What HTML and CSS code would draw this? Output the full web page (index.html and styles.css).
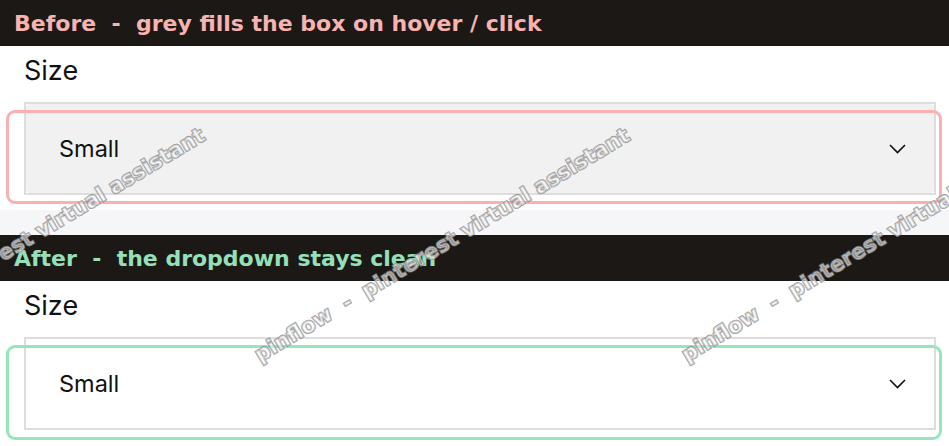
FILE: index.html
```html
<!DOCTYPE html>
<html lang="en">
<head>
  <meta charset="UTF-8">
  <meta name="viewport" content="width=device-width, initial-scale=1.0">
  <title>Size dropdown</title>
  <link rel="stylesheet" href="styles.css">
</head>
<body>
  <div class="page">
    <section class="demo before">
      <h2 class="caption">Before  -  grey fills the box on hover / click</h2>
      <div class="field">
        <label class="field-label">Size</label>
        <div class="select-wrap">
          <div class="select">
            <div class="select-inner">
              <span class="select-value">Small</span>
              <svg class="chevron" width="17" height="10" viewBox="0 0 17 10">
                <path d="M1 1 L8.5 8.5 L16 1" fill="none" stroke="#111" stroke-width="1.6"/>
              </svg>
            </div>
          </div>
          <span class="ring"></span>
        </div>
      </div>
    </section>

    <div class="spacer"></div>

    <section class="demo after">
      <h2 class="caption">After  -  the dropdown stays clean</h2>
      <div class="field">
        <label class="field-label">Size</label>
        <div class="select-wrap">
          <div class="select">
            <div class="select-inner">
              <span class="select-value">Small</span>
              <svg class="chevron" width="17" height="10" viewBox="0 0 17 10">
                <path d="M1 1 L8.5 8.5 L16 1" fill="none" stroke="#111" stroke-width="1.6"/>
              </svg>
            </div>
          </div>
          <span class="ring"></span>
        </div>
      </div>
    </section>

    <div class="watermark">
      <span class="mark m1">pinflow  -  pinterest virtual assistant</span>
      <span class="mark m2">pinflow  -  pinterest virtual assistant</span>
      <span class="mark m3">pinflow  -  pinterest virtual assistant</span>
    </div>
  </div>
</body>
</html>
```

FILE: styles.css
```css
body {
  margin: 0;
  background: #ffffff;
  font-family: Inter, "Noto Sans", sans-serif;
  color: #111;
}

.page {
  position: relative;
  width: 949px;
  height: 446px;
  overflow: hidden;
}

.caption {
  margin: 0;
  height: 46px;
  box-sizing: border-box;
  padding: 2px 0 0 14px;
  background-color: #1c1816;
  font-family: "DejaVu Sans", sans-serif;
  font-weight: 700;
  font-size: 22px;
  line-height: 44px;
  white-space: pre;
}

.before .caption {
  color: #f7b3b0;
}

.after .caption {
  color: #95e0b9;
}

.field {
  padding: 9px 13px 15px 24px;
}

.after .field {
  padding-bottom: 16px;
}

.field-label {
  display: block;
  font-size: 27px;
  line-height: 32px;
  margin-bottom: 15px;
}

.select-wrap {
  position: relative;
}

.select {
  height: 89px;
  border: 2px solid #dddddd;
}

.select-inner {
  height: 100%;
  display: flex;
  align-items: center;
  justify-content: space-between;
  padding: 0 28px 0 33px;
  border-radius: 4px;
}

.before .select-inner {
  background-color: #f1f1f1;
}

.select-value {
  font-size: 23.5px;
}

.chevron {
  display: block;
}

/* highlight ring drawn over the dropdown */
.ring {
  position: absolute;
  top: 8px;
  right: -6px;
  bottom: -9px;
  left: -18px;
  border: 3px solid;
  border-radius: 9px;
  pointer-events: none;
}

.before .ring {
  border-color: #f8b1b0;
}

.after .ring {
  border-color: #96e5bd;
  bottom: -10px;
}

.spacer {
  height: 25px;
  background-color: #f6f6f8;
}

.watermark {
  position: absolute;
  inset: 0;
  pointer-events: none;
}

.mark {
  position: absolute;
  top: 345px;
  font-family: "DejaVu Sans", sans-serif;
  font-weight: 700;
  font-size: 21px;
  line-height: 21px;
  white-space: pre;
  color: rgba(255, 255, 255, 0.55);
  -webkit-text-stroke: 1.8px rgba(135, 135, 135, 0.8);
  paint-order: stroke fill;
  transform: rotate(-31deg);
  transform-origin: 0 100%;
}

.m1 { left: -163px; }
.m2 { left: 262px; }
.m3 { left: 689px; }
```
